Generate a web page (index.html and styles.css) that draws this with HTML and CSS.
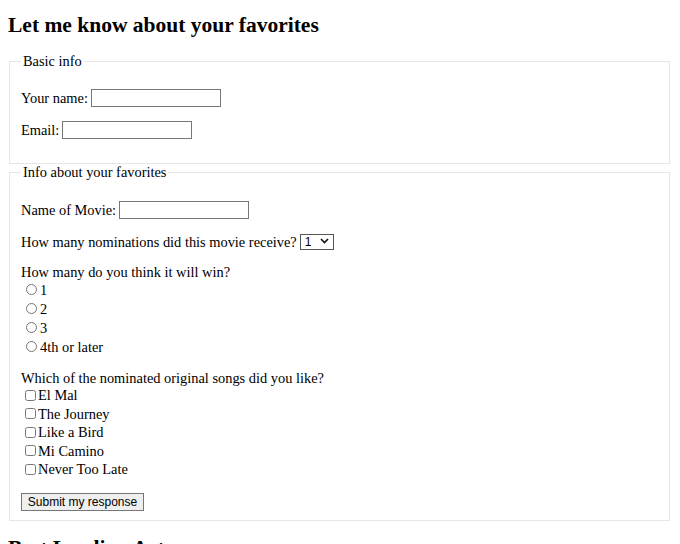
FILE: index.html
```html
<!DOCTYPE html>
<html>
<head>
<meta charset="utf-8">
<title>Favorites</title>
<link rel="stylesheet" href="styles.css">
</head>
<body>
<h1 class="title">Let me know about your favorites</h1>
<form class="form">
  <fieldset class="group">
    <legend class="legend">Basic info</legend>
    <p class="row"><label for="name">Your name:</label> <input class="text" type="text" id="name"></p>
    <p class="row"><label for="email">Email:</label> <input class="text" type="email" id="email"></p>
  </fieldset>
  <fieldset class="group group-fav">
    <legend class="legend">Info about your favorites</legend>
    <p class="row"><label for="movie">Name of Movie:</label> <input class="text" type="text" id="movie"></p>
    <p class="row">How many nominations did this movie receive? <span class="select-wrap"><select class="select"><option>1</option><option>2</option><option>3</option></select><svg class="chev" width="9" height="6" viewBox="0 0 9 6"><path d="M1 1 L4.5 4.5 L8 1" fill="none" stroke="#111" stroke-width="1.6"/></svg></span></p>
    <div class="block">
      <div class="q q-tall">How many do you think it will win?</div>
      <label class="opt opt-radio"><input class="radio" type="radio" name="win">1</label>
      <label class="opt opt-radio"><input class="radio" type="radio" name="win">2</label>
      <label class="opt opt-radio"><input class="radio" type="radio" name="win">3</label>
      <label class="opt opt-radio"><input class="radio" type="radio" name="win">4th or later</label>
    </div>
    <div class="block">
      <div class="q">Which of the nominated original songs did you like?</div>
      <label class="opt"><input class="check" type="checkbox">El Mal</label>
      <label class="opt"><input class="check" type="checkbox">The Journey</label>
      <label class="opt"><input class="check" type="checkbox">Like a Bird</label>
      <label class="opt"><input class="check" type="checkbox">Mi Camino</label>
      <label class="opt"><input class="check" type="checkbox">Never Too Late</label>
    </div>
    <p class="row row-last"><button class="submit" type="button">Submit my response</button></p>
  </fieldset>
</form>
<h1 class="title next">Best Leading Actor</h1>
</body>
</html>
```

FILE: styles.css
```css
html, body {
  background: #fff;
}
body {
  margin: 0 8px;
  font-family: "Liberation Serif", "Times New Roman", serif;
  font-size: 14.4px;
  line-height: 16px;
  color: #000;
}
.title {
  font-size: 21.5px;
  line-height: 26px;
  font-weight: bold;
  margin: 12px 0 15px 0;
}
.title.next {
  margin-top: 14px;
}
.form {
  margin: 0;
}
.group {
  margin: 0 2px 0 1px;
  border: 1px solid #e6e6e6;
  padding: 6px 10px 10px 11px;
}
.group-fav {
  padding-top: 7px;
  padding-bottom: 9px;
}
.legend {
  padding: 0 2px;
}
.row {
  margin: 14px 0;
  display: flex;
  align-items: center;
  gap: 3px;
}
.row-last {
  margin-bottom: 0;
}
.text {
  width: 130px;
  height: 18px;
  box-sizing: border-box;
  border: 1px solid #767676;
  border-radius: 0;
  margin: 0;
  padding: 1px 2px;
  font-size: 12px;
}
.select-wrap {
  position: relative;
  display: inline-block;
}
.select {
  appearance: none;
  -webkit-appearance: none;
  width: 34px;
  height: 16px;
  box-sizing: border-box;
  border: 1px solid #555;
  border-radius: 0;
  background: #fff;
  font-family: "Liberation Sans", Arial, sans-serif;
  font-size: 12px;
  line-height: 14px;
  padding: 0 0 0 4px;
  margin: 0;
  color: #000;
}
.chev {
  position: absolute;
  right: 5px;
  top: 5px;
  pointer-events: none;
}
.block {
  margin: 14px 0;
}
.block + .block {
  margin-top: 15px;
}
.q {
  line-height: 15px;
}
.q-tall {
  line-height: 16px;
}
.opt {
  display: flex;
  align-items: center;
  height: 18.5px;
}
.opt-radio {
  height: 19px;
}
.radio {
  width: 11px;
  height: 11px;
  margin: 0 3px 0 5px;
}
.check {
  width: 11px;
  height: 11px;
  margin: 0 2px 0 4px;
}
.submit {
  font-family: "Liberation Sans", Arial, sans-serif;
  font-size: 12px;
  line-height: 14px;
  height: 18px;
  width: 123px;
  padding: 0 4px;
  margin: 0;
  background: #efefef;
  border: 1px solid #767676;
  border-radius: 0;
  color: #000;
}
```
